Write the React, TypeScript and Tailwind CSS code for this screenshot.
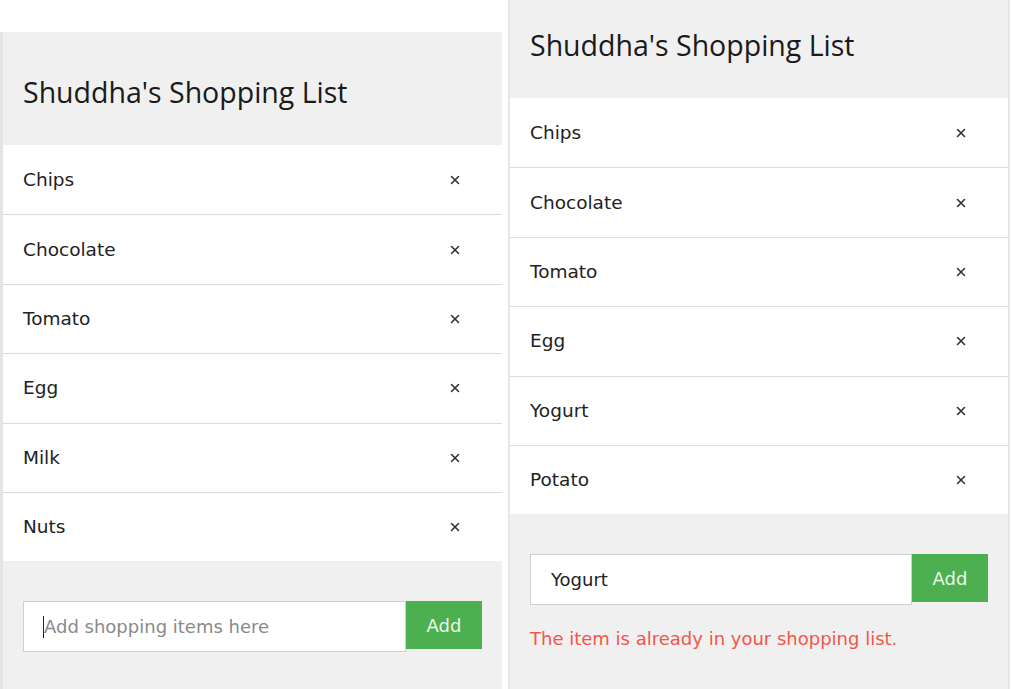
import { X } from 'lucide-react'

type ListProps = {
  items: string[]
  value: string
  error?: string
  caret?: boolean
}

const body = { fontFamily: '"DejaVu Sans", Verdana, sans-serif' }
const heading = { fontFamily: '"Open Sans", "Noto Sans", sans-serif' }

function ShoppingList({ items, value, error, caret }: ListProps) {
  return (
    <div className="flex flex-col bg-[#f0f0f0]" style={body}>
      {/* Header */}
      <div className="flex h-[113px] items-center px-5 pt-2">
        <h1 className="text-[28.5px] text-[#1a1a1a]" style={heading}>
          Shuddha's Shopping List
        </h1>
      </div>

      {/* Items */}
      <ul className="bg-white">
        {items.map((item, i) => (
          <li
            key={item}
            className={`flex h-[69.4px] items-center justify-between pl-5 pr-[40px] text-[18.5px] text-[#222] ${
              i > 0 ? 'border-t border-[#dcdcdc]' : ''
            }`}
          >
            <span>{item}</span>
            <X className="h-[14px] w-[14px] text-[#333]" strokeWidth={2.6} />
          </li>
        ))}
      </ul>

      {/* Add form */}
      <div className="px-5 pt-10 pb-12">
        <div className="flex items-start">
          <div className="relative flex-1">
            <input
              readOnly
              value={value}
              placeholder="Add shopping items here"
              className="h-[51px] w-full border border-[#cfcfcf] bg-white px-5 text-[18px] text-[#222] outline-none placeholder:text-[#8a8a8a]"
            />
            {caret && (
              <span className="absolute top-[15px] left-5 h-[22px] w-px bg-[#222]" />
            )}
          </div>
          <button className="h-[48px] w-[76px] bg-[#4caf50] text-[18px] text-[#eaf8e6]">
            Add
          </button>
        </div>
        {error && (
          <p className="mt-5 text-[18px] text-[#f2564b]">{error}</p>
        )}
      </div>
    </div>
  )
}

export default function App() {
  return (
    <div className="flex h-[689px] w-[1012px] overflow-hidden bg-white">
      <div className="w-[502px] shrink-0 pt-8">
        <div className="border-l-[3px] border-[#e4e4e4]">
          <ShoppingList
            items={['Chips', 'Chocolate', 'Tomato', 'Egg', 'Milk', 'Nuts']}
            value=""
            caret
          />
        </div>
      </div>
      <div className="ml-[6px] w-[502px] shrink-0 overflow-hidden border-x-2 border-[#e6e6e6]">
        <div className="-mt-[15px]">
          <ShoppingList
            items={['Chips', 'Chocolate', 'Tomato', 'Egg', 'Yogurt', 'Potato']}
            value="Yogurt"
            error="The item is already in your shopping list."
          />
        </div>
      </div>
    </div>
  )
}
